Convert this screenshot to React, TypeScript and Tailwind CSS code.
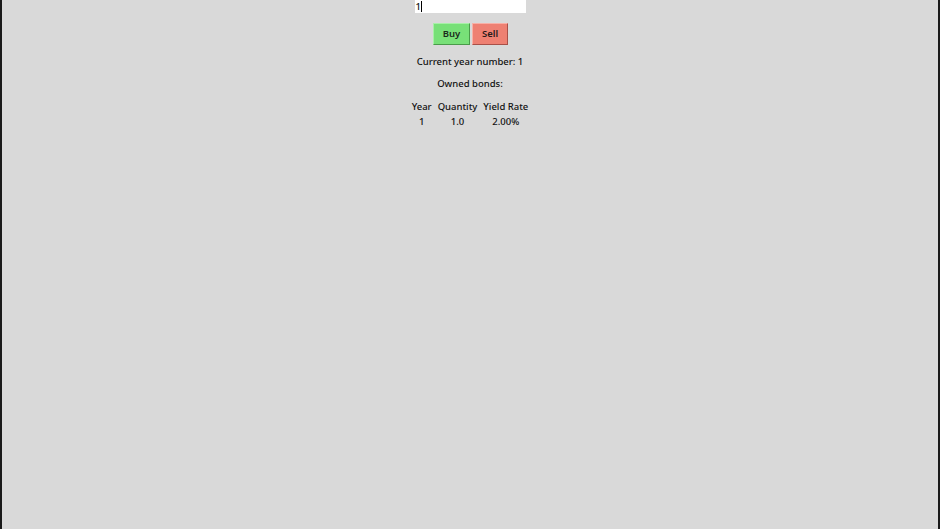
import React from 'react';

const bonds = [{ year: 1, quantity: '1.0', rate: '2.00%' }];

export default function App() {
  return (
    <div
      className="h-[529px] w-[940px] overflow-hidden bg-[#d9d9d9] border-l-2 border-r-2 border-[#1a1a1a] text-[9.5px] font-medium text-[#111] flex flex-col items-center"
      style={{ fontFamily: '"Noto Sans", "Open Sans", sans-serif' }}
    >
      {/* Quantity entry */}
      <div className="w-[111px] h-[13px] bg-white flex items-end pl-[1px] leading-[13px]">
        <span>1</span>
        <span className="w-px h-[11px] bg-black mb-[1px]" />
      </div>

      <div className="mt-[10px] flex gap-[2px] pl-[1px]">
        <button className="w-[37px] h-[22px] bg-[#78e078] border border-t-[#a8f0a8] border-l-[#a8f0a8] border-r-[#4a9a4a] border-b-[#4a9a4a] font-semibold text-[#1b2a1b]">
          Buy
        </button>
        <button className="w-[36px] h-[22px] bg-[#ee8072] border border-t-[#f8b0a6] border-l-[#f8b0a6] border-r-[#a85048] border-b-[#a85048] font-semibold text-[#2a1b1b]">
          Sell
        </button>
      </div>

      <p className="mt-[9px] leading-[16px]">Current year number: 1</p>
      <p className="mt-[6px] leading-[16px]">Owned bonds:</p>

      <table className="mt-[7px] border-collapse">
        <thead>
          <tr className="leading-[15px]">
            <th className="px-[3px] font-medium">Year</th>
            <th className="px-[3px] font-medium">Quantity</th>
            <th className="px-[3px] font-medium">Yield Rate</th>
          </tr>
        </thead>
        <tbody>
          {bonds.map((b) => (
            <tr key={b.year} className="leading-[15px] text-center">
              <td className="px-[3px]">{b.year}</td>
              <td className="px-[3px]">{b.quantity}</td>
              <td className="px-[3px]">{b.rate}</td>
            </tr>
          ))}
        </tbody>
      </table>
    </div>
  );
}
